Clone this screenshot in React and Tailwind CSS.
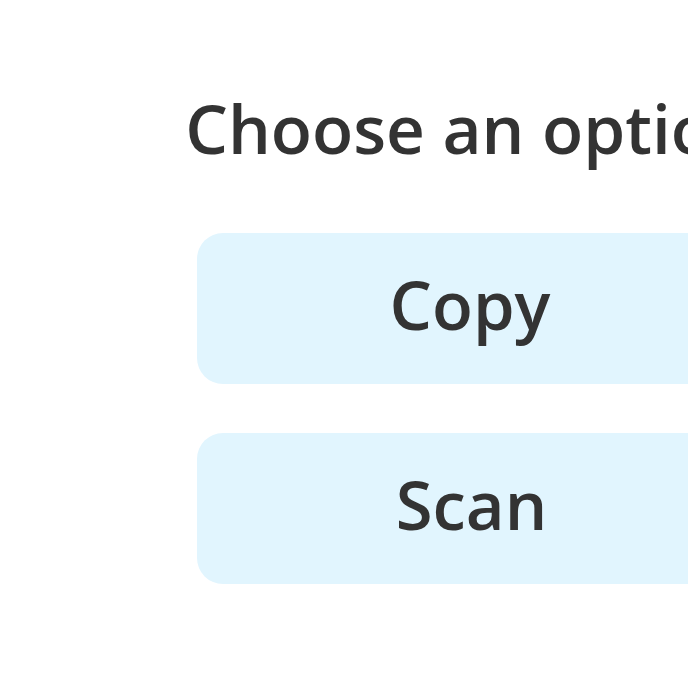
export default function App() {
  return (
    <div className="w-[688px] h-[688px] overflow-hidden bg-white" style={{ fontFamily: '"Open Sans", sans-serif' }}>
      <div className="w-[940px] flex flex-col items-center pt-[86px]">
        <h1 className="text-[67.5px] leading-[84px] font-semibold text-[#333333] whitespace-nowrap">Choose an option</h1>
        <div className="mt-[63px] w-[546px] h-[151px] rounded-[26px] bg-[#e1f5fe] flex items-center justify-center">
          <span className="text-[67px] leading-[80px] font-semibold text-[#333333] -mt-[9px]">Copy</span>
        </div>
        <div className="mt-[49px] w-[546px] h-[151px] rounded-[26px] bg-[#e1f5fe] flex items-center justify-center">
          <span className="text-[67px] leading-[80px] font-semibold text-[#333333] -mt-[9px] ml-[3px]">Scan</span>
        </div>
      </div>
    </div>
  );
}
